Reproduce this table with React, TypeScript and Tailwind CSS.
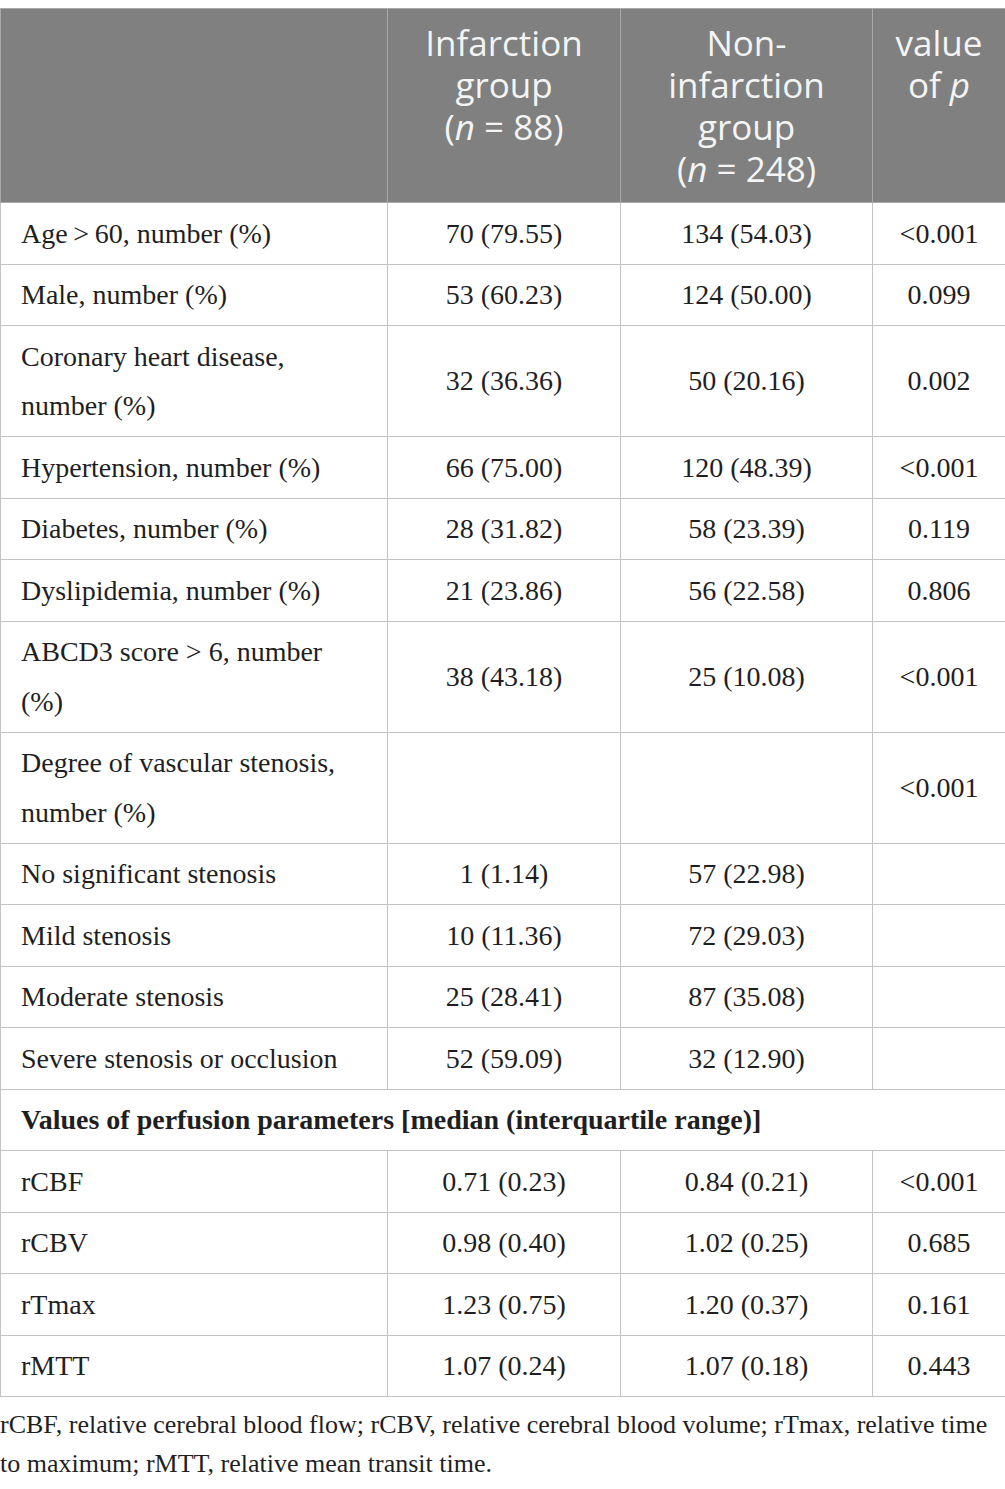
const rows: { label: string; a: string; b: string; p: string }[] = [
  { label: "Age\u2009>\u200960, number (%)", a: "70 (79.55)", b: "134 (54.03)", p: "<0.001" },
  { label: "Male, number (%)", a: "53 (60.23)", b: "124 (50.00)", p: "0.099" },
  { label: "Coronary heart disease, number (%)", a: "32 (36.36)", b: "50 (20.16)", p: "0.002" },
  { label: "Hypertension, number (%)", a: "66 (75.00)", b: "120 (48.39)", p: "<0.001" },
  { label: "Diabetes, number (%)", a: "28 (31.82)", b: "58 (23.39)", p: "0.119" },
  { label: "Dyslipidemia, number (%)", a: "21 (23.86)", b: "56 (22.58)", p: "0.806" },
  { label: "ABCD3 score > 6, number (%)", a: "38 (43.18)", b: "25 (10.08)", p: "<0.001" },
  { label: "Degree of vascular stenosis, number (%)", a: "", b: "", p: "<0.001" },
  { label: "No significant stenosis", a: "1 (1.14)", b: "57 (22.98)", p: "" },
  { label: "Mild stenosis", a: "10 (11.36)", b: "72 (29.03)", p: "" },
  { label: "Moderate stenosis", a: "25 (28.41)", b: "87 (35.08)", p: "" },
  { label: "Severe stenosis or occlusion", a: "52 (59.09)", b: "32 (12.90)", p: "" },
]

const perfusion = [
  { label: "rCBF", a: "0.71 (0.23)", b: "0.84 (0.21)", p: "<0.001" },
  { label: "rCBV", a: "0.98 (0.40)", b: "1.02 (0.25)", p: "0.685" },
  { label: "rTmax", a: "1.23 (0.75)", b: "1.20 (0.37)", p: "0.161" },
  { label: "rMTT", a: "1.07 (0.24)", b: "1.07 (0.18)", p: "0.443" },
]

const serif = "font-['Liberation_Serif',serif]"
const cell = "border border-[#c3c3c3] py-[5.5px] leading-[49.5px] align-middle"
const head = "border border-[#a9a9a9] pt-[13px] pb-[12px] align-top font-normal"

function DataRow({ label, a, b, p }: { label: string; a: string; b: string; p: string }) {
  return (
    <tr>
      <td className={`${cell} pl-[20px] pr-[36px] text-left`}>{label}</td>
      <td className={`${cell} text-center`}>{a}</td>
      <td className={`${cell} text-center`}>{b}</td>
      <td className={`${cell} text-center`}>{p}</td>
    </tr>
  )
}

export default function App() {
  return (
    <div className="w-[1005px] bg-white pt-2">
      <table className={`w-[1005px] table-fixed border-collapse text-[28px] text-[#1f1f1f] ${serif}`}>
        <colgroup>
          <col className="w-[387px]" />
          <col className="w-[233px]" />
          <col className="w-[252px]" />
          <col className="w-[133px]" />
        </colgroup>
        <thead>
          <tr className="bg-[#7f807f] text-[#f4f4f4] font-['Open_Sans',sans-serif] text-[35px] leading-[42px]">
            <th className={head}></th>
            <th className={head}>
              Infarction
              <br />
              group
              <br />(<i>n</i> = 88)
            </th>
            <th className={head}>
              Non-
              <br />
              infarction
              <br />
              group
              <br />(<i>n</i> = 248)
            </th>
            <th className={head}>
              value
              <br />
              of <i>p</i>
            </th>
          </tr>
        </thead>
        <tbody>
          {rows.map((r, i) => (
            <DataRow key={i} {...r} />
          ))}
          <tr>
            <td colSpan={4} className={`${cell} pl-[20px] text-left font-bold`}>
              Values of perfusion parameters [median (interquartile range)]
            </td>
          </tr>
          {perfusion.map((r, i) => (
            <DataRow key={i} {...r} />
          ))}
        </tbody>
      </table>
      <p className={`mt-2 text-[26px] leading-[39px] text-[#1f1f1f] ${serif}`}>
        rCBF, relative cerebral blood flow; rCBV, relative cerebral blood volume; rTmax, relative time to maximum;
        rMTT, relative mean transit time.
      </p>
    </div>
  )
}
